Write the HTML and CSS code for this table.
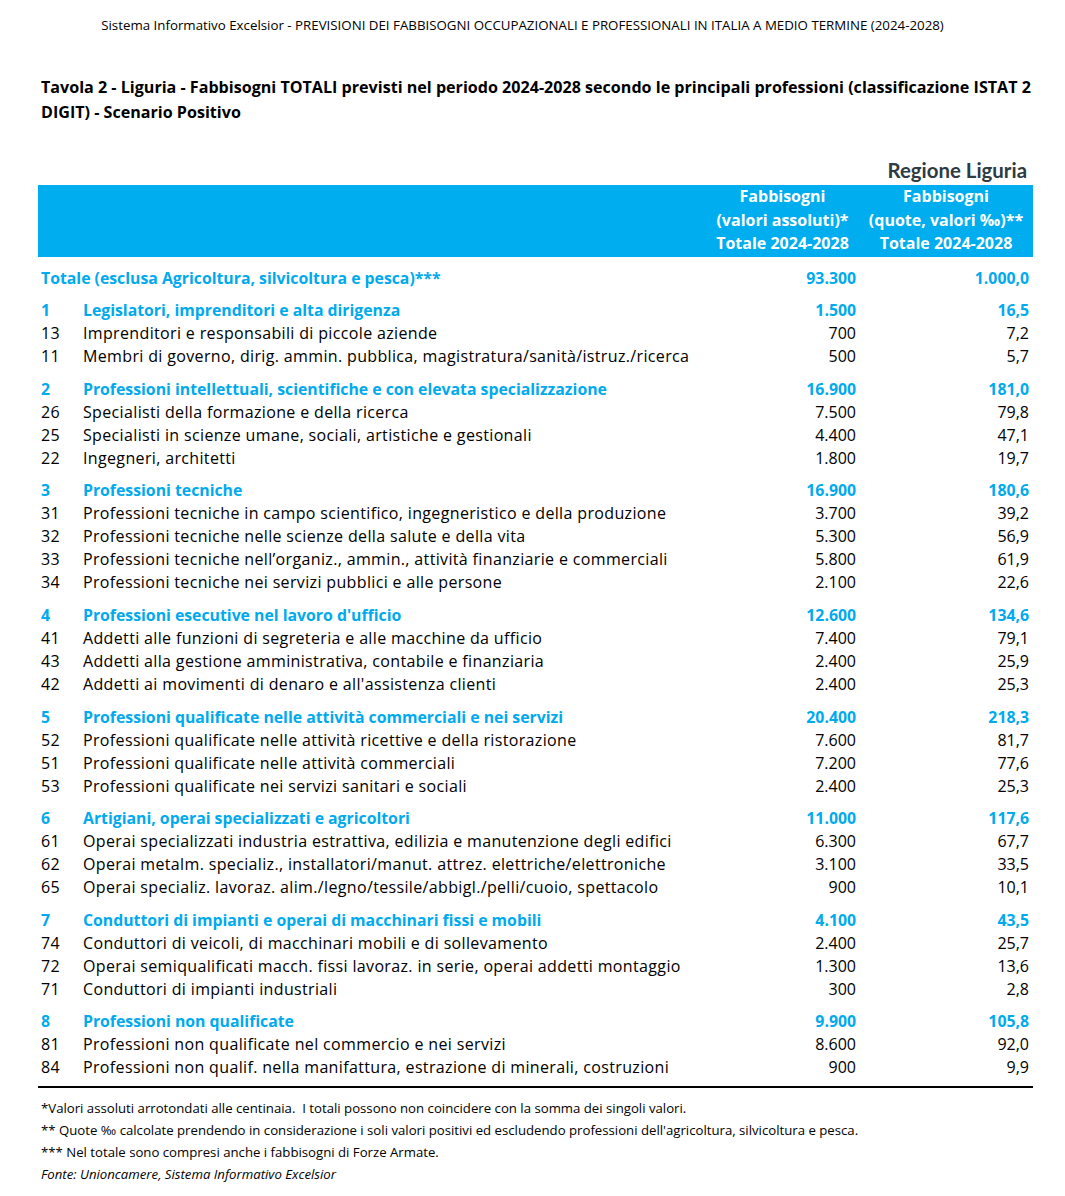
FILE: index.html
```html
<!DOCTYPE html>
<html lang="it">
<head>
<meta charset="utf-8">
<title>Tavola 2 - Liguria</title>
<link rel="stylesheet" href="styles.css">
</head>
<body>
<div class="page">
  <div class="top">Sistema Informativo Excelsior - PREVISIONI DEI FABBISOGNI OCCUPAZIONALI E PROFESSIONALI IN ITALIA A MEDIO TERMINE (2024-2028)</div>
  <h1 class="title">Tavola 2 - Liguria - Fabbisogni TOTALI previsti nel periodo 2024-2028 secondo le principali professioni (classificazione ISTAT 2 DIGIT) - Scenario Positivo</h1>
  <div class="region">Regione Liguria</div>
  <div class="band grid">
    <div></div><div></div>
    <div class="hcell">Fabbisogni<br>(valori assoluti)*<br>Totale 2024-2028</div>
    <div class="hcell">Fabbisogni<br>(quote, valori ‰)**<br>Totale 2024-2028</div>
  </div>
  <div class="body">
    <div class="row grid grp"><div class="tot">Totale (esclusa Agricoltura, silvicoltura e pesca)***</div><div class="v">93.300</div><div class="v2">1.000,0</div></div>

    <div class="row grid grp"><div class="c">1</div><div class="d">Legislatori, imprenditori e alta dirigenza</div><div class="v">1.500</div><div class="v2">16,5</div></div>
    <div class="row grid"><div class="c">13</div><div class="d">Imprenditori e responsabili di piccole aziende</div><div class="v">700</div><div class="v2">7,2</div></div>
    <div class="row grid"><div class="c">11</div><div class="d">Membri di governo, dirig. ammin. pubblica, magistratura/sanità/istruz./ricerca</div><div class="v">500</div><div class="v2">5,7</div></div>

    <div class="row grid grp"><div class="c">2</div><div class="d">Professioni intellettuali, scientifiche e con elevata specializzazione</div><div class="v">16.900</div><div class="v2">181,0</div></div>
    <div class="row grid"><div class="c">26</div><div class="d">Specialisti della formazione e della ricerca</div><div class="v">7.500</div><div class="v2">79,8</div></div>
    <div class="row grid"><div class="c">25</div><div class="d">Specialisti in scienze umane, sociali, artistiche e gestionali</div><div class="v">4.400</div><div class="v2">47,1</div></div>
    <div class="row grid"><div class="c">22</div><div class="d">Ingegneri, architetti</div><div class="v">1.800</div><div class="v2">19,7</div></div>

    <div class="row grid grp"><div class="c">3</div><div class="d">Professioni tecniche</div><div class="v">16.900</div><div class="v2">180,6</div></div>
    <div class="row grid"><div class="c">31</div><div class="d">Professioni tecniche in campo scientifico, ingegneristico e della produzione</div><div class="v">3.700</div><div class="v2">39,2</div></div>
    <div class="row grid"><div class="c">32</div><div class="d">Professioni tecniche nelle scienze della salute e della vita</div><div class="v">5.300</div><div class="v2">56,9</div></div>
    <div class="row grid"><div class="c">33</div><div class="d">Professioni tecniche nell’organiz., ammin., attività finanziarie e commerciali</div><div class="v">5.800</div><div class="v2">61,9</div></div>
    <div class="row grid"><div class="c">34</div><div class="d">Professioni tecniche nei servizi pubblici e alle persone</div><div class="v">2.100</div><div class="v2">22,6</div></div>

    <div class="row grid grp"><div class="c">4</div><div class="d">Professioni esecutive nel lavoro d'ufficio</div><div class="v">12.600</div><div class="v2">134,6</div></div>
    <div class="row grid"><div class="c">41</div><div class="d">Addetti alle funzioni di segreteria e alle macchine da ufficio</div><div class="v">7.400</div><div class="v2">79,1</div></div>
    <div class="row grid"><div class="c">43</div><div class="d">Addetti alla gestione amministrativa, contabile e finanziaria</div><div class="v">2.400</div><div class="v2">25,9</div></div>
    <div class="row grid"><div class="c">42</div><div class="d">Addetti ai movimenti di denaro e all'assistenza clienti</div><div class="v">2.400</div><div class="v2">25,3</div></div>

    <div class="row grid grp"><div class="c">5</div><div class="d">Professioni qualificate nelle attività commerciali e nei servizi</div><div class="v">20.400</div><div class="v2">218,3</div></div>
    <div class="row grid"><div class="c">52</div><div class="d">Professioni qualificate nelle attività ricettive e della ristorazione</div><div class="v">7.600</div><div class="v2">81,7</div></div>
    <div class="row grid"><div class="c">51</div><div class="d">Professioni qualificate nelle attività commerciali</div><div class="v">7.200</div><div class="v2">77,6</div></div>
    <div class="row grid"><div class="c">53</div><div class="d">Professioni qualificate nei servizi sanitari e sociali</div><div class="v">2.400</div><div class="v2">25,3</div></div>

    <div class="row grid grp"><div class="c">6</div><div class="d">Artigiani, operai specializzati e agricoltori</div><div class="v">11.000</div><div class="v2">117,6</div></div>
    <div class="row grid"><div class="c">61</div><div class="d">Operai specializzati industria estrattiva, edilizia e manutenzione degli edifici</div><div class="v">6.300</div><div class="v2">67,7</div></div>
    <div class="row grid"><div class="c">62</div><div class="d">Operai metalm. specializ., installatori/manut. attrez. elettriche/elettroniche</div><div class="v">3.100</div><div class="v2">33,5</div></div>
    <div class="row grid"><div class="c">65</div><div class="d">Operai specializ. lavoraz. alim./legno/tessile/abbigl./pelli/cuoio, spettacolo</div><div class="v">900</div><div class="v2">10,1</div></div>

    <div class="row grid grp"><div class="c">7</div><div class="d">Conduttori di impianti e operai di macchinari fissi e mobili</div><div class="v">4.100</div><div class="v2">43,5</div></div>
    <div class="row grid"><div class="c">74</div><div class="d">Conduttori di veicoli, di macchinari mobili e di sollevamento</div><div class="v">2.400</div><div class="v2">25,7</div></div>
    <div class="row grid"><div class="c">72</div><div class="d">Operai semiqualificati macch. fissi lavoraz. in serie, operai addetti montaggio</div><div class="v">1.300</div><div class="v2">13,6</div></div>
    <div class="row grid"><div class="c">71</div><div class="d">Conduttori di impianti industriali</div><div class="v">300</div><div class="v2">2,8</div></div>

    <div class="row grid grp"><div class="c">8</div><div class="d">Professioni non qualificate</div><div class="v">9.900</div><div class="v2">105,8</div></div>
    <div class="row grid"><div class="c">81</div><div class="d">Professioni non qualificate nel commercio e nei servizi</div><div class="v">8.600</div><div class="v2">92,0</div></div>
    <div class="row grid"><div class="c">84</div><div class="d">Professioni non qualif. nella manifattura, estrazione di minerali, costruzioni</div><div class="v">900</div><div class="v2">9,9</div></div>
  </div>
  <div class="notes">
    <p>*Valori assoluti arrotondati alle centinaia.&nbsp; I totali possono non coincidere con la somma dei singoli valori.</p>
    <p>** Quote ‰ calcolate prendendo in considerazione i soli valori positivi ed escludendo professioni dell'agricoltura, silvicoltura e pesca.</p>
    <p>*** Nel totale sono compresi anche i fabbisogni di Forze Armate.</p>
    <p class="src">Fonte: Unioncamere, Sistema Informativo Excelsior</p>
  </div>
</div>
</body>
</html>
```
FILE: styles.css
```css
* { box-sizing: border-box; }
html, body { margin: 0; padding: 0; background: #fff; }
body { font-family: "Open Sans", Lato, sans-serif; color: #000; }
.page { width: 1065px; padding: 17px 32px 0 38px; }
.top { font-size: 13.3px; line-height: 16px; text-align: center; padding-right: 26px; }
.title { margin: 42px 0 0 3px; font-size: 16.1px; font-weight: 700; line-height: 25px; width: 995px; }
.region { margin-top: 35px; height: 25px; line-height: 20px; font-family: Lato, sans-serif; font-size: 20.4px; font-weight: 700; color: #2e3b42; text-align: right; padding-right: 6px; }
.grid { display: grid; grid-template-columns: 45px 623px 153px 174px; }
.band { background: #00aeef; height: 72px; color: #fff; font-weight: 700; font-size: 16px; line-height: 23.5px; }
.hcell { text-align: center; }
.body { border-bottom: 2px solid #000; padding-bottom: 7px; }
.row { height: 23px; line-height: 23px; font-size: 16px; letter-spacing: 0.35px; white-space: nowrap; }
.grp { margin-top: 9.6px; color: #00aaee; font-weight: 700; font-size: 15.8px; letter-spacing: 0; }
.c { padding-left: 3px; }
.tot { grid-column: 1 / 3; padding-left: 3px; }
.v { text-align: right; padding-right: 3px; letter-spacing: 0; }
.v2 { text-align: right; padding-right: 4px; letter-spacing: 0; }
.notes { padding: 9px 0 0 3px; font-size: 13.2px; line-height: 22px; }
.notes p { margin: 0; }
.notes .src { font-style: italic; }
```
